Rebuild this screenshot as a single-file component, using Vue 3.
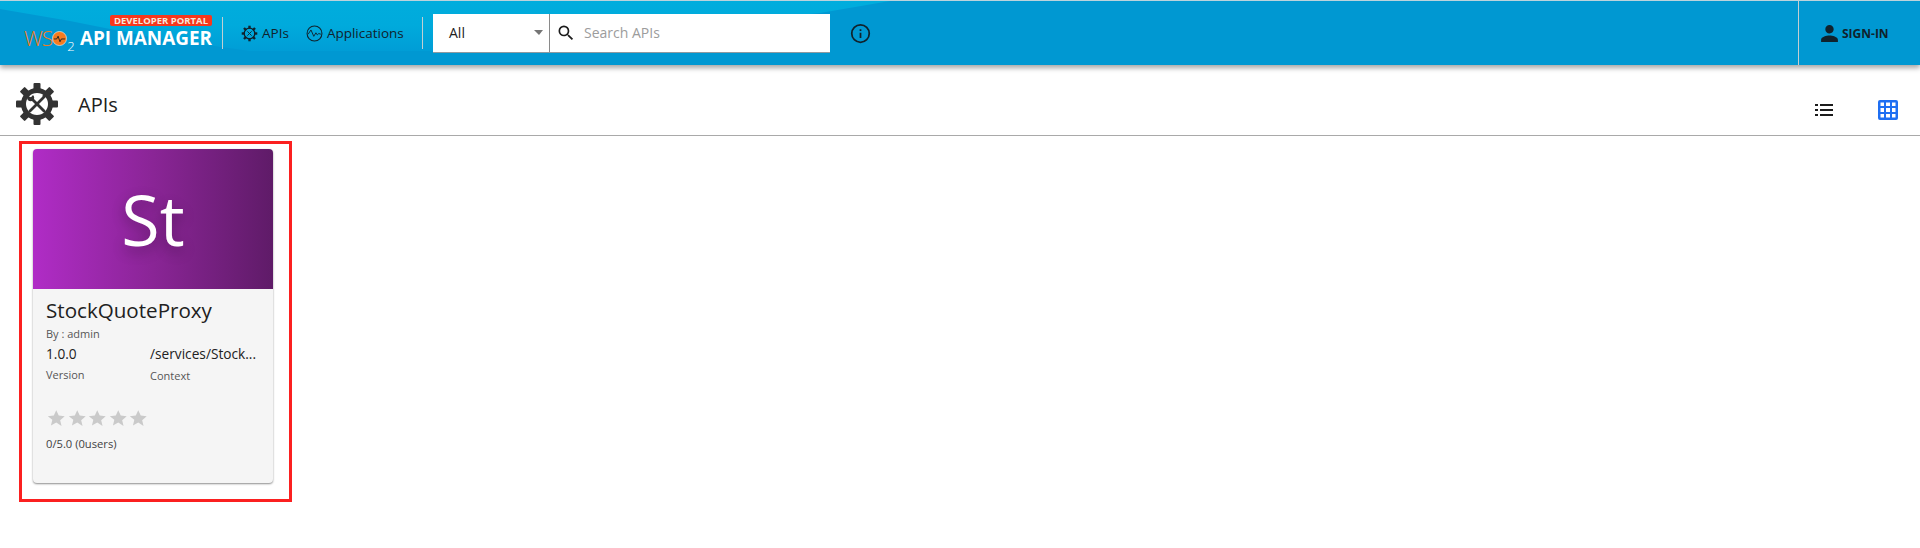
<script setup>
const stars = [1, 2, 3, 4, 5];
const starPath = 'M12 2.5l2.9 6.4 7 .7-5.3 4.6 1.6 6.9L12 17l-6.2 3.6 1.6-6.9L2.100 9.600l7-.7z';
const teeth = [0, 45, 90, 135, 180, 225, 270, 315];
</script>

<template>
  <div class="page">
    <header class="topbar">
      <div class="logo">
        <span class="portal-tag">DEVELOPER PORTAL</span>
        <div class="logo-line">
          <span class="wso">WS</span>
          <svg class="wso-o" viewBox="0 0 16 16">
            <circle cx="8" cy="8" r="7.500" fill="#f47b20" stroke="#fff" stroke-width="0.600" />
            <path d="M2 8.500h3l1.500-3 2 6 1.500-3h4" fill="none" stroke="#222" stroke-width="1" />
          </svg>
          <span class="wso-two">2</span>
          <span class="product">API MANAGER</span>
        </div>
      </div>
      <span class="divider"></span>
      <nav class="nav">
        <a class="nav-link">
          <svg viewBox="0 0 24 24" class="nav-icon">
            <g fill="#10222c">
              <rect v-for="t in teeth" :key="t" x="10.300" y="1" width="3.400" height="4.500" :transform="`rotate(${t} 12 12)`" />
            </g>
            <circle cx="12" cy="12" r="7.500" fill="none" stroke="#10222c" stroke-width="1.800" />
            <path d="M9 9l6 6M15 9l-6 6" stroke="#10222c" stroke-width="1.300" />
          </svg>
          APIs
        </a>
        <a class="nav-link">
          <svg viewBox="0 0 24 24" class="nav-icon">
            <circle cx="12" cy="12" r="10.500" fill="none" stroke="#10222c" stroke-width="1.500" />
            <path d="M3 13l4-6 4 9 3-5 2 3 2-2 3 1" fill="none" stroke="#10222c" stroke-width="1.300" />
          </svg>
          Applications
        </a>
      </nav>
      <span class="divider second"></span>
      <div class="search">
        <div class="scope">
          <span>All</span>
          <span class="caret"></span>
        </div>
        <div class="query">
          <svg viewBox="0 0 24 24" class="search-icon">
            <path d="M15.500 14h-.79l-.28-.27A6.470 6.470 0 0 0 16 9.500 6.500 6.500 0 1 0 9.500 16c1.610 0 3.090-.59 4.230-1.570l.27.28v.79l5 4.990L20.490 19l-4.990-5zm-6 0C7.010 14 5 11.990 5 9.500S7.010 5 9.500 5 14 7.010 14 9.500 11.990 14 9.500 14z" fill="#1c1c1c" />
          </svg>
          <span class="placeholder">Search APIs</span>
        </div>
      </div>
      <svg viewBox="0 0 24 24" class="info">
        <circle cx="12" cy="12" r="10" fill="none" stroke="#10222c" stroke-width="2" />
        <path d="M11 11h2v6h-2zM11 7h2v2h-2z" fill="#10222c" />
      </svg>
      <div class="signin">
        <svg viewBox="0 0 24 24" class="person">
          <path d="M12 12c2.700 0 4.800-2.200 4.800-4.800S14.700 2.400 12 2.400 7.200 4.500 7.200 7.200 9.300 12 12 12zm0 2.400c-3.200 0-9.600 1.600-9.600 4.800v2.400h19.200v-2.400c0-3.200-6.400-4.800-9.600-4.800z" fill="#10222c" />
        </svg>
        <span>SIGN-IN</span>
      </div>
    </header>

    <section class="titlebar">
      <svg viewBox="0 0 42 42" class="title-icon">
        <g fill="#333">
          <rect v-for="t in teeth" :key="t" x="17.500" y="0" width="7" height="8" rx="1" :transform="`rotate(${t} 21 21)`" />
        </g>
        <circle cx="21" cy="21" r="13.500" fill="#fff" stroke="#333" stroke-width="5" />
        <path d="M15.500 15.500L28 28" stroke="#333" stroke-width="2.800" stroke-linecap="round" />
        <path d="M27 15L14 28" stroke="#333" stroke-width="2.800" stroke-linecap="round" />
        <path d="M13.200 11.800a4 4 0 0 0-1.400 5.300 4 4 0 0 0 5.300 .1 4 4 0 0 0-.1-5.300l-2 2.400-1.800-.6z" fill="#333" />
        <path d="M26 13l3-2.500 2 2-2.500 3z" fill="#333" />
      </svg>
      <h1>APIs</h1>
      <div class="views">
        <svg viewBox="0 0 18 14" class="list-icon">
          <path d="M0 1h3v2H0zM5 1h13v2H5zM0 6h3v2H0zM5 6h13v2H5zM0 11h3v2H0zM5 11h13v2H5z" fill="#1c1c1c" />
        </svg>
        <svg viewBox="0 0 20 20" class="grid-icon">
          <path d="M2 0h16a2 2 0 0 1 2 2v16a2 2 0 0 1-2 2H2a2 2 0 0 1-2-2V2a2 2 0 0 1 2-2zm.500 2.500v3.500h3.500V2.500zm5.500 0v3.500h4V2.500zm6 0v3.500h3.500V2.500zM2.500 8v4h3.500V8zm5.500 0v4h4V8zm6 0v4h3.500V8zM2.500 14v3.500h3.500V14zm5.500 0v3.500h4V14zm6 0v3.500h3.500V14z" fill="#1f6ff2" fill-rule="evenodd" />
        </svg>
      </div>
    </section>

    <main class="listing">
      <div class="highlight">
        <article class="card">
          <div class="thumb"><span>St</span></div>
          <div class="card-body">
            <h2>StockQuoteProxy</h2>
            <p class="owner">By : admin</p>
            <div class="meta">
              <div class="meta-version">
                <div class="value">1.0.0</div>
                <div class="label">Version</div>
              </div>
              <div class="meta-context">
                <div class="value">/services/Stock...</div>
                <div class="label">Context</div>
              </div>
            </div>
            <div class="stars">
              <svg v-for="s in stars" :key="s" viewBox="0 0 24 24" class="star">
                <path :d="starPath" fill="#cacaca" />
              </svg>
            </div>
            <p class="rating">0/5.0 (0users)</p>
          </div>
        </article>
      </div>
    </main>
  </div>
</template>

<style>
html, body {
  margin: 0;
  background: #fff;
}
</style>

<style scoped>
.page {
  width: 1920px;
  height: 548px;
  overflow: hidden;
  font-family: "Open Sans", "Noto Sans", sans-serif;
  color: #212121;
}

.topbar {
  height: 64px;
  border-top: 1px solid #bcd3dc;
  display: flex;
  align-items: center;
  background: #0098d2;
  box-shadow: 0 3px 5px rgba(0, 0, 0, 0.35);
  position: relative;
}

/* the lighter wave behind the logo and the search box */
.topbar::before {
  content: "";
  position: absolute;
  left: 0;
  top: 0;
  width: 900px;
  height: 50px;
  background: linear-gradient(180deg, #00addd 0, #00aadc 24px, #009dd6 50px);
  clip-path: polygon(0 8px, 70px 20px, 150px 36px, 250px 50px, 560px 50px, 720px 22px, 820px 12px, 890px 0, 0 0);
}

.topbar > * {
  position: relative;
}

.logo {
  margin-left: 24px;
  width: 188px;
  height: 64px;
}

.portal-tag {
  position: absolute;
  right: 0;
  top: 14px;
  width: 102px;
  height: 11px;
  line-height: 11px;
  text-align: center;
  background: #f9371c;
  border-radius: 2px;
  font-size: 9.500px;
  font-weight: 700;
  color: #f6e7dc;
}

.logo-line {
  position: absolute;
  left: 0;
  right: 0;
  top: 25px;
  display: flex;
  align-items: center;
  height: 24px;
}

.wso {
  font-size: 21px;
  font-weight: 300;
  color: #f47b20;
  letter-spacing: -1px;
}

.wso-o {
  width: 15px;
  height: 15px;
}

.wso-two {
  font-size: 13px;
  font-weight: 300;
  color: #fff;
  align-self: flex-end;
  margin-bottom: -5px;
}

.product {
  margin-left: auto;
  font-size: 18.900px;
  font-weight: 700;
  color: #fff;
  white-space: nowrap;
}

.divider {
  width: 1px;
  height: 32px;
  background: #c3cfd2;
  margin-left: 10px;
}

.divider.second {
  margin-left: 0;
}

.nav {
  display: flex;
  align-items: center;
  width: 199px;
  padding-left: 18px;
  box-sizing: border-box;
  gap: 17px;
}

.nav-link {
  display: flex;
  align-items: center;
  gap: 4px;
  font-size: 13.500px;
  color: #10222c;
  white-space: nowrap;
}

.nav-icon {
  width: 17px;
  height: 17px;
}

.search {
  margin-left: 10px;
  width: 397px;
  height: 39px;
  display: flex;
  background: #fff;
  border-bottom: 1px solid #8e9aa0;
  box-sizing: border-box;
  font-size: 14px;
}

.scope {
  width: 117px;
  border-right: 1px solid #8a8a8a;
  display: flex;
  align-items: center;
  justify-content: space-between;
  padding: 0 6px 0 16px;
  box-sizing: border-box;
}

.caret {
  border-left: 5px solid transparent;
  border-right: 4.500px solid transparent;
  border-top: 5px solid #757575;
}

.query {
  display: flex;
  align-items: center;
  flex: 1;
  padding-left: 6px;
  gap: 8px;
}

.search-icon {
  width: 20px;
  height: 20px;
}

.placeholder {
  color: #9c9c9c;
}

.info {
  width: 21px;
  height: 21px;
  margin-left: 20px;
}

.signin {
  margin-left: auto;
  width: 122px;
  height: 100%;
  box-sizing: border-box;
  border-left: 1px solid #c3cfd2;
  display: flex;
  align-items: center;
  padding-left: 20px;
  gap: 2px;
  font-size: 12px;
  font-weight: 700;
  color: #10222c;
}

.person {
  width: 21px;
  height: 21px;
}

.titlebar {
  height: 62px;
  padding: 8px 0 0 16px;
  border-bottom: 1px solid #a9a9a9;
  display: flex;
  align-items: center;
}

.title-icon {
  width: 42px;
  height: 42px;
}

h1 {
  margin: 0 0 0 20px;
  font-size: 20px;
  font-weight: 400;
  color: #212121;
}

.views {
  margin-left: auto;
  display: flex;
  align-items: center;
  padding-right: 22px;
  padding-top: 12px;
  gap: 45px;
}

.list-icon {
  width: 18px;
  height: 14px;
}

.grid-icon {
  width: 20px;
  height: 20px;
}

.listing {
  padding: 5px 0 0 19px;
}

.highlight {
  width: 273px;
  height: 361px;
  box-sizing: border-box;
  border: 3px solid #fb2020;
  padding: 5px 0 0 11px;
}

.card {
  width: 240px;
  height: 334px;
  border-radius: 4px;
  overflow: hidden;
  background: #f5f5f5;
  box-shadow: 0 1px 2px rgba(0, 0, 0, 0.45);
}

.thumb {
  height: 140px;
  display: flex;
  align-items: center;
  justify-content: center;
  background: linear-gradient(90deg, #b02cc6 0, #8a2596 50%, #5f1b68 100%);
}

.thumb span {
  font-size: 70px;
  font-weight: 500;
  color: #fff;
  text-shadow: 0 5px 14px rgba(0, 0, 0, 0.3);
}

.card-body {
  padding: 8px 13px 0;
}

h2 {
  margin: 0;
  font-size: 20.600px;
  line-height: 27px;
  font-weight: 400;
  color: #212121;
}

.owner {
  margin: 2px 0 0;
  font-size: 11px;
  line-height: 15px;
  color: #555;
}

.meta {
  display: flex;
  margin-top: 3px;
}

.meta-version {
  width: 104px;
}

.value {
  font-size: 13.700px;
  line-height: 20px;
  color: #212121;
  white-space: nowrap;
}

.label {
  margin-top: 3px;
  font-size: 11px;
  line-height: 15px;
  color: #555;
}

.meta-context .label {
  margin-top: 4px;
}

.stars {
  display: flex;
  margin-top: 25px;
  height: 20px;
}

.star {
  width: 20.500px;
  height: 20.500px;
}

.rating {
  margin: 8px 0 0;
  font-size: 11.200px;
  line-height: 15px;
  color: #424242;
}
</style>
